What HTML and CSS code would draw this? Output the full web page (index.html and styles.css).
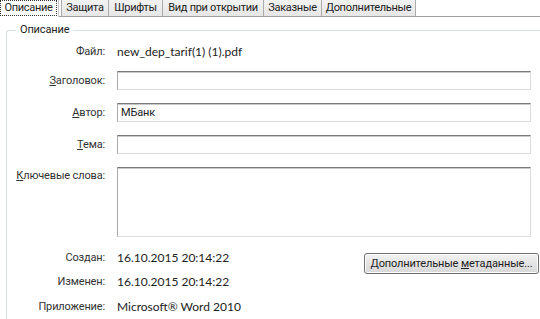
FILE: index.html
```html
<!DOCTYPE html>
<html lang="ru">
<head>
<meta charset="utf-8">
<link rel="stylesheet" href="styles.css">
</head>
<body>
<div class="tabs">
  <div class="tab active t1"><span class="focus">Описание</span></div>
  <div class="tab t2">Защита</div>
  <div class="tab t3">Шрифты</div>
  <div class="tab t4">Вид при открытии</div>
  <div class="tab t5">Заказные</div>
  <div class="tab t6">Дополнительные</div>
</div>
<fieldset class="group">
  <legend>Описание</legend>
  <div class="row r-file"><span class="lbl">Файл:</span><span class="val latin">new_dep_tarif(1) (1).pdf</span></div>
  <div class="row r-in first"><span class="lbl"><u>З</u>аголовок:</span><div class="input"></div></div>
  <div class="row r-in"><span class="lbl"><u>А</u>втор:</span><div class="input">МБанк</div></div>
  <div class="row r-in"><span class="lbl"><u>Т</u>ема:</span><div class="input"></div></div>
  <div class="row r-kw"><span class="lbl"><u>К</u>лючевые слова:</span><div class="input area"></div></div>
  <div class="row r-created"><span class="lbl">Создан:</span><span class="val latin">16.10.2015 20:14:22</span><button class="btn">Дополнительные <u>м</u>етаданные...</button></div>
  <div class="row r-mod"><span class="lbl">Изменен:</span><span class="val latin">16.10.2015 20:14:22</span></div>
  <div class="row r-app"><span class="lbl">Приложение:</span><span class="val latin">Microsoft® Word 2010</span></div>
</fieldset>
</body>
</html>
```
FILE: styles.css
```css
html, body {
  margin: 0;
  padding: 0;
  background: #ffffff;
  overflow: hidden;
  width: 540px;
  height: 319px;
}
body {
  font-family: Roboto, "Noto Sans", sans-serif;
  font-size: 11px;
  letter-spacing: -0.15px;
  color: #1e1e1e;
}
.latin {
  font-family: Lato, Roboto, sans-serif;
  font-size: 12px;
  letter-spacing: 0;
}
.tabs {
  display: flex;
  height: 17px;
  border-bottom: 1px solid #a0a0a0;
  box-sizing: border-box;
}
.tab {
  height: 16px;
  flex: none;
  box-sizing: border-box;
  padding: 0;
  text-align: center;
  line-height: 15px;
  background: linear-gradient(#f3f3f3, #e6e6e6);
  border-right: 1px solid #acacac;
  color: #222;
  white-space: nowrap;
  letter-spacing: -0.3px;
}
.t1 { width: 59px; margin-right: 2px; }
.t2 { width: 48px; border-left: 1px solid #acacac; }
.t3 { width: 54px; }
.t4 { width: 101px; }
.t5 { width: 58px; }
.t6 { width: 94px; }
.tab.active {
  background: #ffffff;
  height: 17px;
  padding: 0 1px 0 0;
  border-right: 1px solid #c8c8c8;
}
.tab.active .focus {
  display: block;
  border: 1px dotted #333;
  line-height: 14px;
}
.group {
  margin: 5px 0 0 6px;
  padding: 0;
  width: 534px;
  height: 297px;
  border: 1px solid #d9e1e6;
  border-right: none;
  border-bottom: none;
  border-radius: 3px 0 0 0;
  box-sizing: border-box;
}
.group legend {
  margin-left: 9px;
  padding: 0 4px;
  line-height: 16px;
  color: #222;
}
.row {
  display: flex;
  align-items: center;
  height: 19px;
}
.lbl {
  width: 98px;
  text-align: right;
  flex: none;
  color: #333;
  white-space: nowrap;
}
.val {
  margin-left: 12px;
  white-space: nowrap;
  color: #222;
}
.r-file { margin-top: 4px; }
.r-in.first { margin-top: 10px; }
.r-in + .r-in, .r-in + .r-kw { margin-top: 13px; }
.input {
  margin-left: 12px;
  width: 414px;
  height: 19px;
  flex: none;
  box-sizing: border-box;
  border: 1px solid #dcdcdc;
  border-top-color: #7a7a7a;
  border-left-color: #a8a8a8;
  box-shadow: inset 0 1px 0 #c8c8c8;
  padding: 0 3px;
  line-height: 17px;
  background: #fff;
}
.r-kw {
  height: 70px;
  align-items: flex-start;
}
.r-kw .lbl { margin-top: 2px; }
.input.area { height: 70px; }
.r-created { margin-top: 11px; }
.btn {
  margin-left: auto;
  margin-right: 1px;
  margin-top: 11px;
  height: 21px;
  width: 175px;
  flex: none;
  padding: 0;
  font: inherit;
  letter-spacing: inherit;
  white-space: nowrap;
  color: #1e1e1e;
  background: linear-gradient(#f4f4f4, #e3e3e3 50%, #d8d8d8);
  border: 1px solid #707070;
  border-radius: 3px;
  box-shadow: inset 0 0 0 1px #fcfcfc;
}
.r-mod { margin-top: 5px; }
.r-app { margin-top: 6px; }
```
